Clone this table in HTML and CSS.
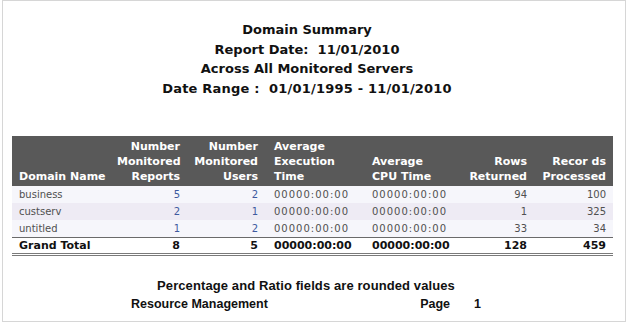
FILE: index.html
```html
<!DOCTYPE html>
<html>
<head>
<meta charset="utf-8">
<link rel="stylesheet" href="styles.css">
</head>
<body>
<div class="frame">
  <div class="titles">
    <div>Domain Summary</div>
    <div>Report Date:&nbsp; 11/01/2010</div>
    <div>Across All Monitored Servers</div>
    <div class="range">Date Range :&nbsp; 01/01/1995 - 11/01/2010</div>
  </div>
  <table class="grid">
    <colgroup>
      <col class="c1"><col class="c2"><col class="c3"><col class="c4"><col class="c5"><col class="c6"><col class="c7">
    </colgroup>
    <thead>
      <tr>
        <th class="l">Domain Name</th>
        <th class="r">Number<br>Monitored<br>Reports</th>
        <th class="r">Number<br>Monitored<br>Users</th>
        <th class="l">Average<br>Execution<br>Time</th>
        <th class="l">Average<br>CPU Time</th>
        <th class="r">Rows<br>Returned</th>
        <th class="r">Recor ds<br>Processed</th>
      </tr>
    </thead>
    <tbody>
      <tr class="odd">
        <td class="l">business</td><td class="r num">5</td><td class="r num">2</td>
        <td class="l time">00000:00:00</td><td class="l time">00000:00:00</td><td class="r">94</td><td class="r">100</td>
      </tr>
      <tr class="even">
        <td class="l">custserv</td><td class="r num">2</td><td class="r num">1</td>
        <td class="l time">00000:00:00</td><td class="l time">00000:00:00</td><td class="r">1</td><td class="r">325</td>
      </tr>
      <tr class="odd">
        <td class="l">untitled</td><td class="r num">1</td><td class="r num">2</td>
        <td class="l time">00000:00:00</td><td class="l time">00000:00:00</td><td class="r">33</td><td class="r">34</td>
      </tr>
      <tr class="total">
        <td class="l">Grand Total</td><td class="r">8</td><td class="r">5</td>
        <td class="l">00000:00:00</td><td class="l">00000:00:00</td><td class="r">128</td><td class="r">459</td>
      </tr>
    </tbody>
  </table>
  <div class="footer">
    <div class="note">Percentage and Ratio fields are rounded values</div>
    <div class="meta">
      <span>Resource Management</span>
      <span class="page"><span>Page</span><span>1</span></span>
    </div>
  </div>
</div>
</body>
</html>
```

FILE: styles.css
```css
html, body {
  margin: 0;
  padding: 0;
  background: #ffffff;
}
.frame {
  box-sizing: border-box;
  width: 624px;
  height: 322px;
  margin-left: 2px;
  border: 1px solid #d6d6d6;
  padding-top: 19px;
}
.titles {
  font-family: "DejaVu Sans", Verdana, sans-serif;
  font-weight: bold;
  font-size: 13px;
  line-height: 19.5px;
  color: #111;
  text-align: center;
  padding-right: 14px;
}
.titles .range { letter-spacing: 0.2px; }
.grid {
  margin-top: 38px;
  margin-left: 9px;
  width: 601px;
  border-collapse: collapse;
  table-layout: fixed;
  font-family: "DejaVu Sans", Verdana, sans-serif;
}
.c1 { width: 98px; }
.c2 { width: 77px; }
.c3 { width: 78px; }
.c4 { width: 100px; }
.c5 { width: 89px; }
.c6 { width: 80px; }
.c7 { width: 79px; }
.grid th {
  background: #595959;
  color: #ffffff;
  font-size: 11px;
  font-weight: bold;
  line-height: 15px;
  padding: 3px 7px 2px 7px;
  vertical-align: bottom;
  white-space: nowrap;
  height: 44px;
  box-sizing: border-box;
}
.grid th.l { text-align: left; }
.grid th.r { text-align: right; }
.grid td {
  font-size: 10px;
  color: #505050;
  padding: 0 7px;
  height: 17px;
  line-height: 17px;
  white-space: nowrap;
}
.grid td.l { text-align: left; }
.grid td.r { text-align: right; }
.grid td.time { letter-spacing: 1px; }
.grid th:nth-child(4), .grid td:nth-child(4) { padding-left: 9px; }
.grid td.num { color: #3d5a9e; }
.grid tr.odd td { background: #f6f6fb; }
.grid tr.even td { background: #eeebf4; }
.grid tr.total td {
  background: #ffffff;
  color: #111;
  font-weight: bold;
  font-size: 11px;
  height: 15px;
  line-height: 15px;
  border-top: 1px solid #6a6a6a;
  border-bottom: 3px double #7a7a7a;
}
.footer {
  margin-left: 128px;
  width: 350px;
  margin-top: 20px;
  font-family: "Liberation Sans", Arial, sans-serif;
  font-weight: bold;
  font-size: 13px;
  line-height: 19px;
  color: #111;
}
.note {
  text-align: center;
  letter-spacing: 0.1px;
}
.meta {
  display: flex;
  justify-content: space-between;
  font-size: 12.5px;
}
.page {
  display: flex;
  gap: 24px;
}
```
